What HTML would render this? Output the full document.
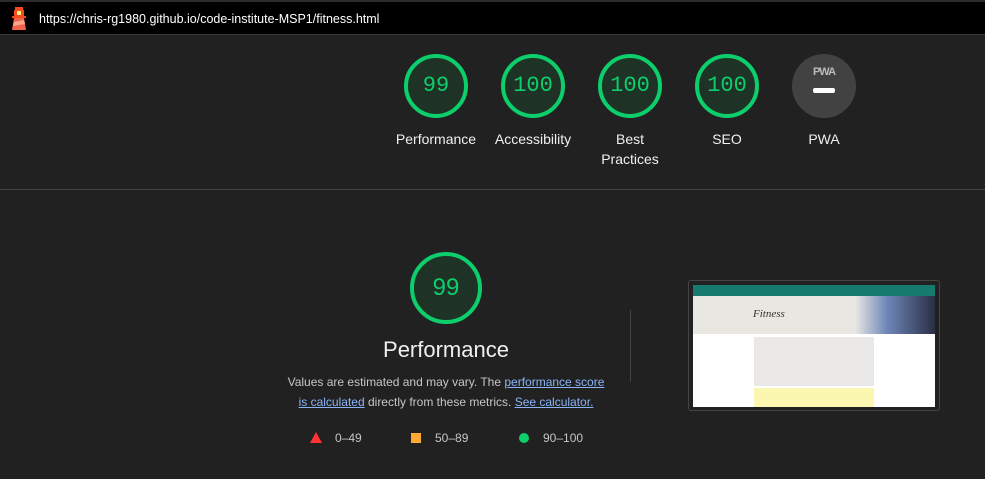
<!DOCTYPE html>
<html><head><meta charset="utf-8"><style>
*{margin:0;padding:0;box-sizing:border-box}
body{width:985px;height:479px;background:#212121;font-family:"Liberation Sans",Arial,sans-serif;position:relative;overflow:hidden;color:#f0f0f0}
.top{position:absolute;left:0;top:0;width:985px;height:35px;background:#000;border-top:2px solid #2c2c2c;border-bottom:1px solid #3a3a3a}
.url{position:absolute;left:39px;top:10px;font-size:12.5px;color:#fff}
.g{position:absolute;width:64px;height:64px;border-radius:50%;border:4px solid #0cce6b;background:#1e3326;color:#0cce6b;font-family:"Liberation Mono",monospace;font-size:22px;text-align:center;line-height:56px}
.lbl{position:absolute;width:110px;text-align:center;font-size:14px;line-height:20px;color:#f0f0f0}
.sep{position:absolute;left:0;top:189px;width:985px;height:1px;background:#444}
a{color:#8ab4f8;text-decoration:underline}
</style></head><body>
<div class="top">
<svg style="position:absolute;left:10px;top:4px" width="18" height="26" viewBox="0 0 18 26">
<rect x="5" y="1" width="8" height="3" fill="#f44b21"/>
<rect x="4" y="4" width="10" height="6" fill="#f44b21"/>
<rect x="7" y="5" width="4" height="4" fill="#fff176"/>
<rect x="2" y="10" width="14" height="2" fill="#f44b21"/>
<polygon points="4,12 14,12 16,24 2,24" fill="#f0624b"/>
<polygon points="4,16 14,14 15,18 3,20" fill="#ffa385"/>
</svg>
<div class="url">https://chris-rg1980.github.io/code-institute-MSP1/fitness.html</div>
</div>

<div class="g" style="left:404px;top:54px">99</div>
<div class="g" style="left:501px;top:54px">100</div>
<div class="g" style="left:598px;top:54px">100</div>
<div class="g" style="left:695px;top:54px">100</div>
<div style="position:absolute;left:792px;top:54px;width:64px;height:64px;border-radius:50%;background:#424242">
<div style="position:absolute;left:0;width:64px;top:12px;text-align:center;font-size:11px;font-weight:bold;color:#bbb;letter-spacing:-1px">PWA</div>
<div style="position:absolute;left:21px;top:34px;width:22px;height:5px;border-radius:2px;background:#fff"></div>
</div>
<div class="lbl" style="left:381px;top:129px">Performance</div>
<div class="lbl" style="left:478px;top:129px">Accessibility</div>
<div class="lbl" style="left:575px;top:129px">Best<br>Practices</div>
<div class="lbl" style="left:672px;top:129px">SEO</div>
<div class="lbl" style="left:769px;top:129px">PWA</div>

<div class="sep"></div>

<div class="g" style="left:410px;top:252px;width:72px;height:72px;line-height:64px;font-family:'Liberation Sans',sans-serif;font-size:24px">99</div>
<div style="position:absolute;left:296px;width:300px;top:337px;text-align:center;font-size:22px;color:#f0f0f0">Performance</div>
<div style="position:absolute;left:284px;width:324px;top:372px;text-align:center;font-size:12px;line-height:20px;color:#c6c6c6">Values are estimated and may vary. The <a>performance score</a> <a>is calculated</a> directly from these metrics. <a>See calculator.</a></div>
<div style="position:absolute;left:630px;top:310px;width:1px;height:72px;background:#444"></div>

<svg style="position:absolute;left:310px;top:432px" width="12" height="11"><polygon points="6,0 12,11 0,11" fill="#ff3333"/></svg>
<div style="position:absolute;left:335px;top:431px;font-size:12px;color:#c6c6c6">0–49</div>
<div style="position:absolute;left:411px;top:433px;width:10px;height:10px;background:#ffaa33"></div>
<div style="position:absolute;left:435px;top:431px;font-size:12px;color:#c6c6c6">50–89</div>
<div style="position:absolute;left:519px;top:433px;width:10px;height:10px;border-radius:50%;background:#0cce6b"></div>
<div style="position:absolute;left:543px;top:431px;font-size:12px;color:#c6c6c6">90–100</div>

<div style="position:absolute;left:688px;top:280px;width:252px;height:131px;border:1px solid #444;border-radius:3px;background:#212121">
<div style="position:absolute;left:4px;top:4px;width:242px;height:122px;background:#fff;overflow:hidden">
<div style="height:11px;background:#167a6e"></div>
<div style="height:38px;background:#e9e7e2;position:relative">
<div style="position:absolute;left:60px;top:12px;font-family:'Liberation Serif',serif;font-style:italic;font-size:11px;color:#333">Fitness</div>
<div style="position:absolute;right:0;top:0;width:80px;height:38px;background:linear-gradient(90deg,#e9e7e2,#6d86b8 40%,#2a2f45)"></div>
</div>
<div style="position:absolute;left:61px;top:52px;width:120px;height:49px;background:#e9e8e6"></div>
<div style="position:absolute;left:61px;top:103px;width:120px;height:20px;background:#fbf7b0"></div>
</div>
</div>
</body></html>
